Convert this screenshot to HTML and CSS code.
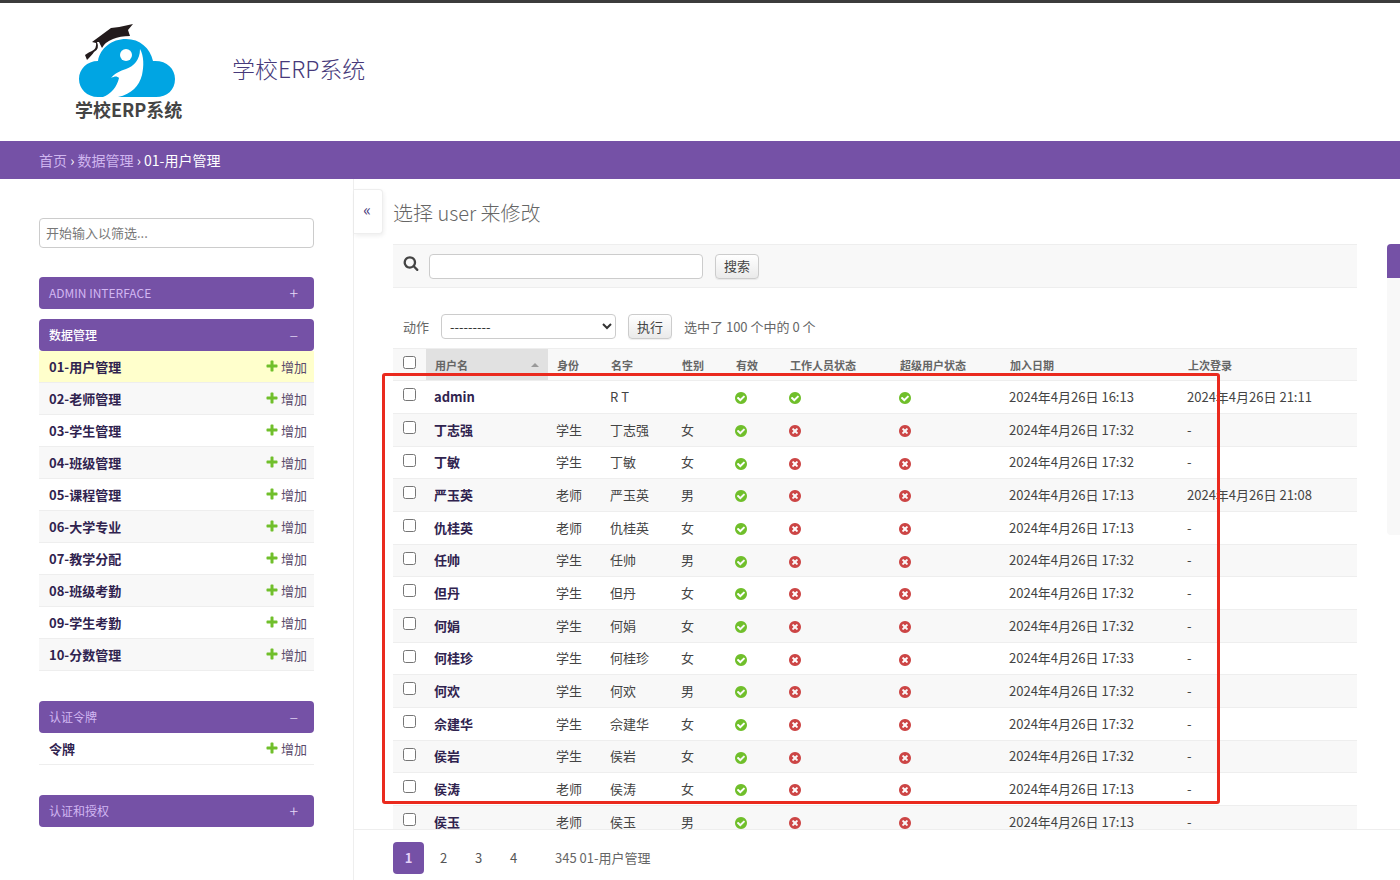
FILE: index.html
```html
<!DOCTYPE html>
<html lang="zh-CN">
<head>
<meta charset="utf-8">
<title>选择 user 来修改 | 学校ERP系统</title>
<link rel="stylesheet" href="styles.css">
</head>
<body>
<svg class="sprite" aria-hidden="true">
  <symbol id="add" viewBox="0 0 1792 1792"><path fill="#70bf2b" d="M1600 796v192q0 40-28 68t-68 28h-416v416q0 40-28 68t-68 28h-192q-40 0-68-28t-28-68v-416h-416q-40 0-68-28t-28-68v-192q0-40 28-68t68-28h416v-416q0-40 28-68t68-28h192q40 0 68 28t28 68v416h416q40 0 68 28t28 68z"/></symbol>
  <symbol id="yes" viewBox="128 128 1536 1536"><path fill="#70bf2b" d="M1412 734q0-28-18-46l-91-90q-19-19-45-19t-45 19l-408 407-226-226q-19-19-45-19t-45 19l-91 90q-18 18-18 46 0 27 18 45l362 362q19 19 45 19 27 0 46-19l543-543q18-18 18-45zm252 162q0 209-103 385.500t-279.500 279.500-385.500 103-385.500-103-279.500-279.500-103-385.500 103-385.500 279.500-279.500 385.500-103 385.500 103 279.500 279.500 103 385.500z"/></symbol>
  <symbol id="no" viewBox="128 128 1536 1536"><path fill="#cc4545" d="M1277 1122q0-26-19-45l-181-181 181-181q19-19 19-45 0-27-19-46l-90-90q-19-19-46-19-26 0-45 19l-181 181-181-181q-19-19-45-19-27 0-46 19l-90 90q-19 19-19 46 0 26 19 45l181 181-181 181q-19 19-19 45 0 27 19 46l90 90q19 19 46 19 26 0 45-19l181-181 181 181q19 19 45 19 27 0 46-19l90-90q19-19 19-46zm387-226q0 209-103 385.500t-279.500 279.500-385.500 103-385.500-103-279.500-279.500-103-385.500 103-385.500 279.500-279.500 385.500-103 385.500 103 279.500 279.500 103 385.500z"/></symbol>
</svg>

<header class="header">
  <svg class="logo" viewBox="0 0 140 115" role="img" aria-label="学校ERP系统">
    <path fill="#00a5e3" d="M38 82C27 82 19 74 19 64S27 46 38 46C40 33 52 24 66 24S90 33 93 46C106 45 115 53 115 64S107 82 96 82Z"/>
    <path fill="#fff" d="M43 82C51 79 57 72 59 63C57 61 55 61 51 63C55 58 60 56 66 54C74 51 80 45 80 34C84 41 84 51 82 60C79 71 72 79 58 82Z"/>
    <circle cx="66" cy="40" r="6" fill="#fff"/>
    <path fill="#231b1c" d="M32 27L51 13Q61 12 73 9L68 15L70 21Q60 21 53 24Q45 27 42 33L39 27L37 27Q40 34 34 37Q32 40 27 45L25 40Q29 37 32 36Q37 33 36 28Z"/>
    <text class="logo-text" x="15" y="102">学校ERP系统</text>
  </svg>
  <a class="site-name" href="#">学校ERP系统</a>
</header>

<nav class="breadcrumbs"><a href="#">首页</a> › <a href="#">数据管理</a> › 01-用户管理</nav>

<div class="layout">
  <aside class="sidebar">
    <input class="filter-input" type="search" placeholder="开始输入以筛选..." aria-label="筛选导航">
    <section class="module"><h2 class="caption"><a href="#">ADMIN INTERFACE</a><span class="sign">+</span></h2></section>
    <section class="module module-tight">
      <h2 class="caption current"><a href="#">数据管理</a><span class="sign">–</span></h2>
      <ul class="models">
        <li class="selected"><a class="model" href="#">01-用户管理</a><a class="add" href="#"><svg><use href="#add"/></svg>增加</a></li>
        <li><a class="model" href="#">02-老师管理</a><a class="add" href="#"><svg><use href="#add"/></svg>增加</a></li>
        <li><a class="model" href="#">03-学生管理</a><a class="add" href="#"><svg><use href="#add"/></svg>增加</a></li>
        <li><a class="model" href="#">04-班级管理</a><a class="add" href="#"><svg><use href="#add"/></svg>增加</a></li>
        <li><a class="model" href="#">05-课程管理</a><a class="add" href="#"><svg><use href="#add"/></svg>增加</a></li>
        <li><a class="model" href="#">06-大学专业</a><a class="add" href="#"><svg><use href="#add"/></svg>增加</a></li>
        <li><a class="model" href="#">07-教学分配</a><a class="add" href="#"><svg><use href="#add"/></svg>增加</a></li>
        <li><a class="model" href="#">08-班级考勤</a><a class="add" href="#"><svg><use href="#add"/></svg>增加</a></li>
        <li><a class="model" href="#">09-学生考勤</a><a class="add" href="#"><svg><use href="#add"/></svg>增加</a></li>
        <li><a class="model" href="#">10-分数管理</a><a class="add" href="#"><svg><use href="#add"/></svg>增加</a></li>
      </ul>
    </section>
    <section class="module">
      <h2 class="caption"><a href="#">认证令牌</a><span class="sign">–</span></h2>
      <ul class="models">
        <li><a class="model" href="#">令牌</a><a class="add" href="#"><svg><use href="#add"/></svg>增加</a></li>
      </ul>
    </section>
    <section class="module"><h2 class="caption"><a href="#">认证和授权</a><span class="sign">+</span></h2></section>
  </aside>

  <main class="main">
    <button class="toggle" type="button" aria-label="切换导航">«</button>
    <div class="content">
      <h1 class="title">选择 user 来修改</h1>
      <div class="changelist">
        <div class="results">
          <form class="search">
            <label for="searchbar" aria-label="搜索"><svg class="search-icon" viewBox="0 0 1792 1792"><path fill="#444" d="M1216 832q0-185-131.500-316.500t-316.500-131.500-316.500 131.500-131.500 316.500 131.500 316.500 316.500 131.500 316.500-131.500 131.500-316.500zm512 832q0 52-38 90t-90 38q-54 0-90-38l-343-342q-179 124-399 124-143 0-273.500-55.500t-225-150-150-225-55.500-273.500 55.500-273.500 150-225 225-150 273.500-55.500 273.500 55.500 225 150 150 225 55.500 273.500q0 220-124 399l343 343q37 37 37 90z"/></svg></label>
            <input class="search-input" id="searchbar" type="text">
            <button class="btn" type="button">搜索</button>
          </form>
          <form class="actions">
            <label for="action">动作</label>
            <select id="action"><option>---------</option></select>
            <button class="btn" type="button">执行</button>
            <span>选中了 100 个中的 0 个</span>
          </form>
          <div class="table-wrap">
            <table class="users">
              <colgroup><col class="c-check"><col class="c-user"><col class="c-short"><col class="c-name"><col class="c-short"><col class="c-short"><col class="c-state"><col class="c-state"><col class="c-date"><col></colgroup>
              <thead>
                <tr><th><input type="checkbox" aria-label="全选"></th><th class="sorted"><div class="sort">用户名<i class="arrow"></i></div></th><th>身份</th><th>名字</th><th>性别</th><th>有效</th><th>工作人员状态</th><th>超级用户状态</th><th>加入日期</th><th>上次登录</th></tr>
              </thead>
              <tbody>
                <tr><td><input type="checkbox" aria-label="admin"></td><td><a href="#">admin</a></td><td></td><td>R T</td><td></td><td><svg><use href="#yes"/></svg></td><td><svg><use href="#yes"/></svg></td><td><svg><use href="#yes"/></svg></td><td>2024年4月26日 16:13</td><td>2024年4月26日 21:11</td></tr>
                <tr><td><input type="checkbox" aria-label="丁志强"></td><td><a href="#">丁志强</a></td><td>学生</td><td>丁志强</td><td>女</td><td><svg><use href="#yes"/></svg></td><td><svg><use href="#no"/></svg></td><td><svg><use href="#no"/></svg></td><td>2024年4月26日 17:32</td><td>-</td></tr>
                <tr><td><input type="checkbox" aria-label="丁敏"></td><td><a href="#">丁敏</a></td><td>学生</td><td>丁敏</td><td>女</td><td><svg><use href="#yes"/></svg></td><td><svg><use href="#no"/></svg></td><td><svg><use href="#no"/></svg></td><td>2024年4月26日 17:32</td><td>-</td></tr>
                <tr><td><input type="checkbox" aria-label="严玉英"></td><td><a href="#">严玉英</a></td><td>老师</td><td>严玉英</td><td>男</td><td><svg><use href="#yes"/></svg></td><td><svg><use href="#no"/></svg></td><td><svg><use href="#no"/></svg></td><td>2024年4月26日 17:13</td><td>2024年4月26日 21:08</td></tr>
                <tr><td><input type="checkbox" aria-label="仇桂英"></td><td><a href="#">仇桂英</a></td><td>老师</td><td>仇桂英</td><td>女</td><td><svg><use href="#yes"/></svg></td><td><svg><use href="#no"/></svg></td><td><svg><use href="#no"/></svg></td><td>2024年4月26日 17:13</td><td>-</td></tr>
                <tr><td><input type="checkbox" aria-label="任帅"></td><td><a href="#">任帅</a></td><td>学生</td><td>任帅</td><td>男</td><td><svg><use href="#yes"/></svg></td><td><svg><use href="#no"/></svg></td><td><svg><use href="#no"/></svg></td><td>2024年4月26日 17:32</td><td>-</td></tr>
                <tr><td><input type="checkbox" aria-label="但丹"></td><td><a href="#">但丹</a></td><td>学生</td><td>但丹</td><td>女</td><td><svg><use href="#yes"/></svg></td><td><svg><use href="#no"/></svg></td><td><svg><use href="#no"/></svg></td><td>2024年4月26日 17:32</td><td>-</td></tr>
                <tr><td><input type="checkbox" aria-label="何娟"></td><td><a href="#">何娟</a></td><td>学生</td><td>何娟</td><td>女</td><td><svg><use href="#yes"/></svg></td><td><svg><use href="#no"/></svg></td><td><svg><use href="#no"/></svg></td><td>2024年4月26日 17:32</td><td>-</td></tr>
                <tr><td><input type="checkbox" aria-label="何桂珍"></td><td><a href="#">何桂珍</a></td><td>学生</td><td>何桂珍</td><td>女</td><td><svg><use href="#yes"/></svg></td><td><svg><use href="#no"/></svg></td><td><svg><use href="#no"/></svg></td><td>2024年4月26日 17:33</td><td>-</td></tr>
                <tr><td><input type="checkbox" aria-label="何欢"></td><td><a href="#">何欢</a></td><td>学生</td><td>何欢</td><td>男</td><td><svg><use href="#yes"/></svg></td><td><svg><use href="#no"/></svg></td><td><svg><use href="#no"/></svg></td><td>2024年4月26日 17:32</td><td>-</td></tr>
                <tr><td><input type="checkbox" aria-label="佘建华"></td><td><a href="#">佘建华</a></td><td>学生</td><td>佘建华</td><td>女</td><td><svg><use href="#yes"/></svg></td><td><svg><use href="#no"/></svg></td><td><svg><use href="#no"/></svg></td><td>2024年4月26日 17:32</td><td>-</td></tr>
                <tr><td><input type="checkbox" aria-label="侯岩"></td><td><a href="#">侯岩</a></td><td>学生</td><td>侯岩</td><td>女</td><td><svg><use href="#yes"/></svg></td><td><svg><use href="#no"/></svg></td><td><svg><use href="#no"/></svg></td><td>2024年4月26日 17:32</td><td>-</td></tr>
                <tr><td><input type="checkbox" aria-label="侯涛"></td><td><a href="#">侯涛</a></td><td>老师</td><td>侯涛</td><td>女</td><td><svg><use href="#yes"/></svg></td><td><svg><use href="#no"/></svg></td><td><svg><use href="#no"/></svg></td><td>2024年4月26日 17:13</td><td>-</td></tr>
                <tr><td><input type="checkbox" aria-label="侯玉"></td><td><a href="#">侯玉</a></td><td>老师</td><td>侯玉</td><td>男</td><td><svg><use href="#yes"/></svg></td><td><svg><use href="#no"/></svg></td><td><svg><use href="#no"/></svg></td><td>2024年4月26日 17:13</td><td>-</td></tr>
              </tbody>
            </table>
            <div class="highlight"></div>
          </div>
        </div>
        <aside class="filters"><div class="filters-head"></div></aside>
      </div>
    </div>
    <nav class="paginator">
      <a class="page active" href="#">1</a><a class="page" href="#">2</a><a class="page" href="#">3</a><a class="page" href="#">4</a>
      <span class="total">345 01-用户管理</span>
    </nav>
  </main>
</div>
</body>
</html>
```
FILE: styles.css
```css
* { box-sizing: border-box; }

body {
  display: flex;
  flex-direction: column;
  height: 100vh;
  margin: 0;
  overflow: hidden;
  border-top: 3px solid #3c3c3c;
  background: #fff;
  color: #444;
  font-family: "Noto Sans CJK SC", sans-serif;
  font-size: 13px;
  line-height: 20px;
}

a { color: inherit; text-decoration: none; }
input, select, button { font: inherit; color: inherit; }
.sprite { position: absolute; width: 0; height: 0; }

.header {
  display: flex;
  flex: none;
  align-items: center;
  gap: 32px;
  padding: 12px 60px 11px;
}
.logo { width: 140px; height: 115px; }
.logo-text { font-size: 18px; font-weight: 700; fill: #444; }
.site-name {
  padding-bottom: 10px;
  color: #46397a;
  font-size: 23px;
  font-weight: 300;
  line-height: 30px;
}

.breadcrumbs {
  flex: none;
  padding: 9px 39px;
  background: #7551a6;
  color: #fff;
  font-size: 14px;
}
.breadcrumbs a { color: #cfb5ef; }

.layout { display: flex; flex: 1; min-height: 0; }

.sidebar {
  flex: none;
  width: 354px;
  padding: 39px 39px 0;
  border-right: 1px solid #eee;
  overflow: hidden;
}
.filter-input {
  display: block;
  width: 100%;
  height: 30px;
  margin-bottom: -1px;
  padding: 0 6px 1px;
  border: 1px solid #ccc;
  border-radius: 4px;
  background: #fff;
}
.filter-input::placeholder { color: #777; }
.module { margin-top: 30px; }
.module-tight { margin-top: 10px; }
.caption {
  display: flex;
  align-items: center;
  justify-content: space-between;
  height: 32px;
  margin: 0;
  padding: 0 16px 0 10px;
  border-radius: 4px;
  background: #7551a6;
  color: #d2b7f2;
  font-size: 12px;
  font-weight: 400;
}
.current a { color: #fff; font-weight: 500; }
.sign { padding-bottom: 2px; color: #e6d9f7; font-size: 16px; font-weight: 300; }
.models { margin: 0; padding: 0; list-style: none; }
.models li {
  display: flex;
  align-items: center;
  justify-content: space-between;
  height: 32px;
  padding: 0 7px 0 10px;
  border-bottom: 1px solid #eee;
}
.models li:nth-child(even) { background: #f8f8f8; }
.models .selected { background: #ffffcc; }
.model { color: #30234f; font-weight: 700; }
.add { display: flex; align-items: center; gap: 2px; color: #5b4b6b; }
.add svg { width: 14px; height: 14px; margin-bottom: 2px; }

.main {
  position: relative;
  display: flex;
  flex: 1;
  flex-direction: column;
  min-width: 0;
}
.toggle {
  position: absolute;
  top: 10px;
  left: 0;
  width: 29px;
  height: 45px;
  padding: 0 2px 5px 0;
  border: 1px solid #eee;
  border-left: 0;
  border-radius: 0 4px 4px 0;
  background: #fff;
  box-shadow: 1px 2px 4px #0001;
  color: #46397a;
  font-size: 16px;
}
.content { flex: 1; min-height: 0; padding: 20px 0 0 39px; overflow: hidden; }
.title {
  margin: 0 0 17px;
  color: #666;
  font-size: 20px;
  font-weight: 300;
  line-height: 28px;
}
.changelist { display: flex; gap: 30px; margin-right: -227px; }
.results { flex: 1; min-width: 0; }

.search {
  display: flex;
  align-items: center;
  height: 44px;
  padding: 0 10px;
  border-top: 1px solid #eee;
  border-bottom: 1px solid #eee;
  background: #f8f8f8;
}
.search-icon { display: block; width: 16px; height: 16px; margin: 0 10px 7px 0; }
.search-input {
  width: 274px;
  height: 25px;
  margin-right: 12px;
  border: 1px solid #ccc;
  border-radius: 4px;
  background: #fff;
}
.btn {
  height: 25px;
  padding: 0 8px;
  border: 1px solid #ccc;
  border-radius: 4px;
  background: linear-gradient(#fff, #eaeaea);
  box-shadow: 0 1px 1px #0001;
}
.actions {
  display: flex;
  align-items: center;
  gap: 12px;
  margin: 26px 0 9px;
  padding-left: 10px;
  color: #666;
}
.actions .btn { color: #444; }
.actions select {
  width: 175px;
  height: 25px;
  padding: 0 4px;
  border: 1px solid #ccc;
  border-radius: 4px;
  background: #fff;
  color: #333;
}

.table-wrap { position: relative; }
.users {
  width: 100%;
  border-collapse: collapse;
  table-layout: fixed;
}
.c-check { width: 33px; }
.c-user { width: 122px; }
.c-short { width: 54px; }
.c-name { width: 71px; }
.c-state { width: 110px; }
.c-date { width: 178px; }
.users th, .users td {
  padding: 0 8px 1px;
  border-bottom: 1px solid #eee;
  text-align: left;
  white-space: nowrap;
}
.users th {
  height: 32px;
  padding: 0 9px;
  border-top: 1px solid #eee;
  background: #f8f8f8;
  color: #666;
  font-size: 11px;
  font-weight: 700;
}
.users th:first-child { padding-left: 10px; }
.users .sorted { background: #e1e1e1; }
.sort { display: flex; align-items: center; justify-content: space-between; }
.arrow {
  border: 4px solid transparent;
  border-top: 0;
  border-bottom-color: #999;
}
.users tbody tr { height: 33px; }
.users tbody tr:nth-child(3n) { height: 32px; }
.users tbody tr:nth-child(even) { background: #f8f8f8; }
.users td:first-child { padding-left: 10px; }
.users td a { color: #30234f; font-weight: 700; }
.users input { display: block; width: 13px; height: 13px; margin: 0 0 4px; }
.users td svg { display: block; width: 12px; height: 12px; margin-top: 3px; }

.highlight {
  position: absolute;
  top: 25px;
  left: -11px;
  width: 838px;
  height: 431px;
  border: 3px solid #ea2a1e;
  border-radius: 3px;
  pointer-events: none;
}

.filters {
  flex: none;
  width: 240px;
  height: 291px;
  border-radius: 4px;
  background: #f8f8f8;
  overflow: hidden;
}
.filters-head { height: 34px; background: #7551a6; }

.paginator {
  display: flex;
  flex: none;
  align-items: center;
  gap: 4px;
  height: 51px;
  padding: 5px 39px 0;
  border-top: 1px solid #eee;
  background: #fff;
  color: #666;
}
.page {
  width: 31px;
  padding: 6px 0;
  border-radius: 4px;
  color: #555;
  text-align: center;
}
.active { background: #7551a6; color: #e3d0f8; font-weight: 700; }
.total { margin-left: 22px; }
```
